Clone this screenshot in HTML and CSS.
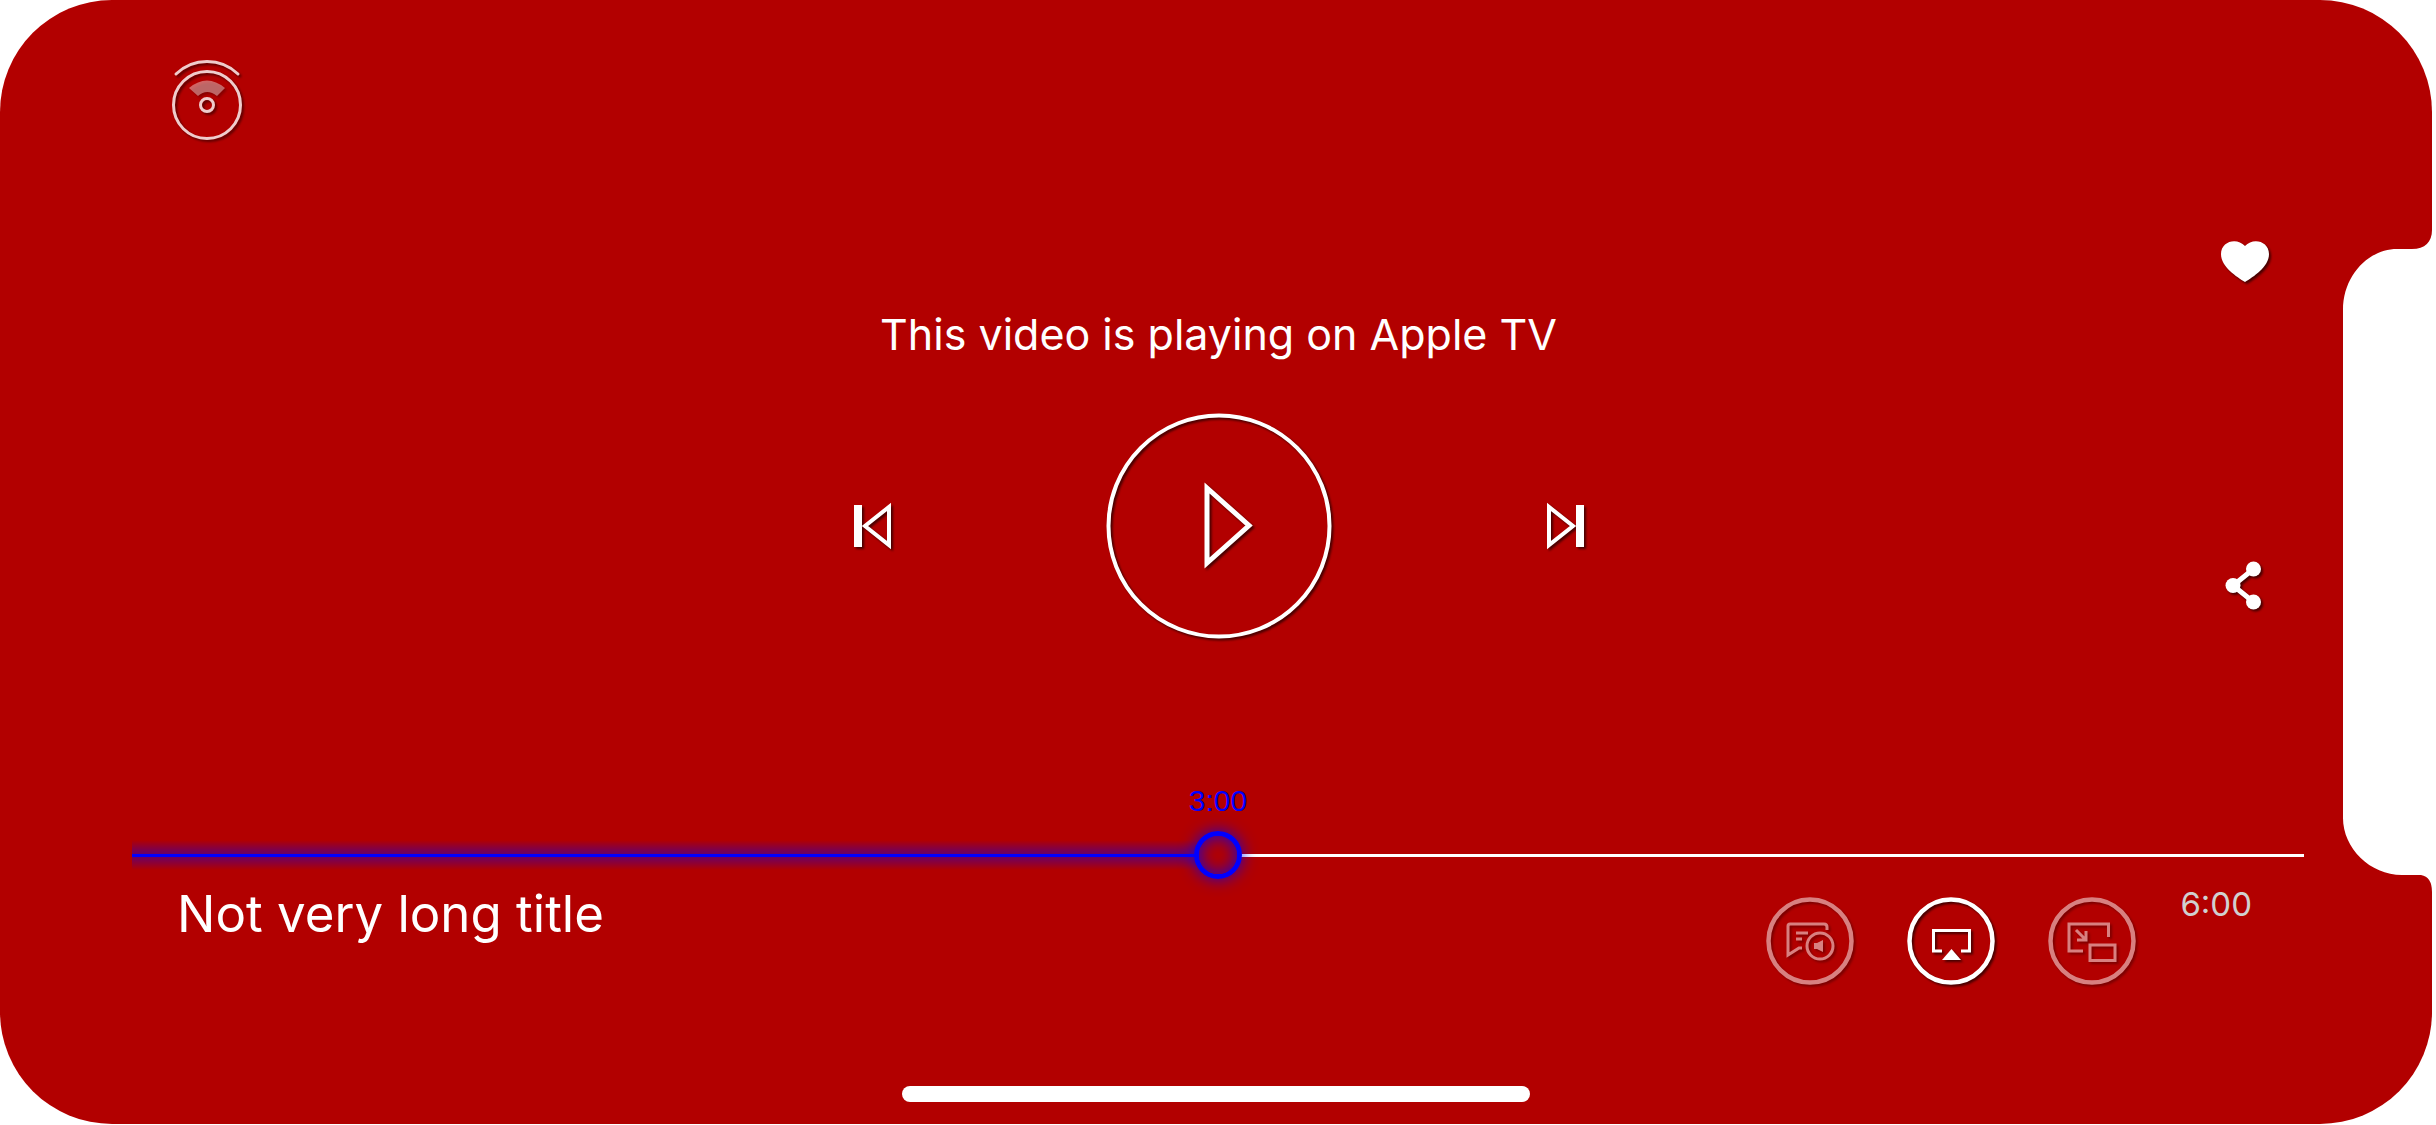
FILE: index.html
```html
<!DOCTYPE html>
<html lang="en">
<head>
<meta charset="utf-8">
<meta name="viewport" content="width=device-width, initial-scale=1">
<title>Video player</title>
<link rel="stylesheet" href="styles.css">
</head>
<body>
<main class="player">
  <header class="top">
    <button class="icon-button cast" type="button" aria-label="360 degree view">
      <svg width="80" height="84" viewBox="0 0 80 84" fill="none" stroke="#fff" stroke-width="3" stroke-linecap="round">
        <path d="M9 18Q22 5.500 40 5.500T71 18"/>
        <circle cx="40" cy="49" r="33.500"/>
        <circle cx="40" cy="49" r="6.500"/>
        <path d="M22 32Q40 17 58 32L50 40Q40 32 31 40Z" fill="#fff" fill-opacity=".5" stroke="none"/>
      </svg>
    </button>
  </header>

  <section class="stage">
    <div class="center">
      <h1 class="message">This video is playing on Apple TV</h1>
      <div class="controls">
        <button class="icon-button" type="button" aria-label="Previous">
          <svg width="48" height="60" viewBox="0 0 48 60" fill="none" stroke="#fff" stroke-width="4">
            <path d="M10 9V51" stroke-width="8"/>
            <path d="M41 11V49L17 30Z"/>
          </svg>
        </button>
        <button class="icon-button play" type="button" aria-label="Play">
          <svg width="226" height="226" viewBox="0 0 226 226" fill="none" stroke="#fff" stroke-width="4">
            <circle cx="113" cy="113" r="110.500"/>
            <path d="M101 75V150L143 112.500Z" stroke-width="5"/>
          </svg>
        </button>
        <button class="icon-button" type="button" aria-label="Next">
          <svg width="48" height="60" viewBox="0 0 48 60" fill="none" stroke="#fff" stroke-width="4">
            <path d="M38 9V51" stroke-width="8"/>
            <path d="M7 11V49L31 30Z"/>
          </svg>
        </button>
      </div>
    </div>
    <div class="actions">
      <button class="icon-button" type="button" aria-label="Like">
        <svg width="60" height="60" viewBox="0 0 60 60" fill="#fff">
          <path d="M30 51C22 46 6 36 6 23C6 10 22 6 30 15C38 6 54 10 54 23C54 36 38 46 30 51Z"/>
        </svg>
      </button>
      <button class="icon-button" type="button" aria-label="Share">
        <svg width="60" height="60" viewBox="0 0 60 60" fill="#fff">
          <path d="M38.500 14L18 30.500L38.500 47" fill="none" stroke="#fff" stroke-width="5"/>
          <circle cx="38.500" cy="14" r="7.500"/><circle cx="18" cy="30.500" r="7.500"/><circle cx="38.500" cy="47" r="7.500"/>
        </svg>
      </button>
    </div>
  </section>

  <section class="timeline">
    <label class="elapsed" for="seek">3:00</label>
    <input class="seek" id="seek" type="range" min="0" max="360" value="180">
  </section>

  <footer class="bottom">
    <h2 class="title">Not very long title</h2>
    <div class="tools">
      <button class="icon-button" type="button" aria-label="Audio and subtitles" disabled>
        <svg width="88" height="88" viewBox="0 0 88 88" fill="none" stroke="#fff" stroke-width="3">
          <circle cx="44" cy="44" r="41.500" stroke-width="4.500"/>
          <path d="M61 33V30Q61 27 58 27H24Q22 27 22 29V58L33 51H36M30 36H42M30 42H36"/>
          <circle cx="54" cy="49" r="13"/>
          <path d="M48 46H51L57 43V55L51 52H48Z" fill="#fff" stroke="none"/>
        </svg>
      </button>
      <button class="icon-button" type="button" aria-label="AirPlay">
        <svg width="88" height="88" viewBox="0 0 88 88" fill="none" stroke="#fff" stroke-width="3">
          <circle cx="44" cy="44" r="41.500" stroke-width="4.500"/>
          <path d="M35 54H26.500V33.500H62.500V54H54"/>
          <path d="M44.500 52L54 63H35Z" fill="#fff" stroke="none"/>
        </svg>
      </button>
      <button class="icon-button" type="button" aria-label="Picture in picture" disabled>
        <svg width="88" height="88" viewBox="0 0 88 88" fill="none" stroke="#fff" stroke-width="3">
          <circle cx="44" cy="44" r="41.500" stroke-width="4.500"/>
          <path d="M60.500 40V27H21V54H35M28 33L38 43M29 43H38V34"/>
          <path d="M42 48H67V63.500H42Z"/>
        </svg>
      </button>
      <span class="duration">6:00</span>
    </div>
  </footer>
  <div class="home"></div>
  <svg class="notch" width="92" height="662" viewBox="0 0 92 662" fill="#fff" aria-hidden="true">
    <path d="M92 0H90C90 12 83 19 70 19H55C27 19 1 45 1 80V588C1 618 28 645 60 645H79Q90 647 90 662H92Z"/>
  </svg>
</main>
</body>
</html>
```

FILE: styles.css
```css
* {
  box-sizing: border-box;
}

body {
  margin: 0;
  background: #fff;
  font-family: Inter, "Liberation Sans", sans-serif;
  color: #fff;
}

.player {
  position: relative;
  display: flex;
  flex-direction: column;
  min-height: calc(100vh - 1px);
  margin: 0 4px 1px 0;
  padding-bottom: 22px;
  border-radius: 112px;
  background: #b20000;
}

.icon-button {
  display: block;
  padding: 0;
  border: 0;
  background: none;
  cursor: pointer;
}

.icon-button svg {
  display: block;
  filter: drop-shadow(2px 2px 1px rgba(0, 0, 0, .6));
}

.icon-button:disabled {
  opacity: .5;
  cursor: default;
}

.top {
  height: 140px;
  padding: 56px 167px 0;
}

.cast {
  opacity: .8;
}

.stage {
  flex: 1;
  display: grid;
  grid-template-columns: 1fr auto 1fr;
  align-items: start;
  padding-left: 5px;
}

.center {
  grid-column: 2;
  padding-top: 166px;
}

.message {
  margin: 0 0 51px;
  font-size: 43px;
  line-height: 56px;
  font-weight: 400;
  text-align: center;
}

.controls {
  display: flex;
  align-items: center;
  justify-content: center;
  gap: 210px;
}

.actions {
  display: grid;
  gap: 264px;
  justify-self: end;
  padding: 91px 157px 0 0;
}

.timeline {
  display: grid;
  gap: 14px;
  padding: 0 128px 0 132px;
}

.elapsed {
  color: #00f;
  font: 30px/32px "Liberation Sans", sans-serif;
  text-align: center;
}

.seek {
  appearance: none;
  width: 100%;
  height: 48px;
  margin: 0;
  background:
    linear-gradient(#00f, #00f) left center / calc(50% - 22px) 3px no-repeat,
    linear-gradient(#fff, #fff) right center / calc(50% - 22px) 3px no-repeat,
    linear-gradient(transparent, rgba(0, 0, 255, .45), transparent) left center / calc(50% - 22px) 30px no-repeat;
}

.seek::-webkit-slider-thumb {
  appearance: none;
  width: 48px;
  height: 48px;
  border: 5px solid #00f;
  border-radius: 50%;
  background: transparent;
  box-shadow: 0 0 16px rgba(0, 0, 255, .8), inset 0 0 16px rgba(0, 0, 255, .8);
}

.bottom {
  display: flex;
  justify-content: space-between;
  align-items: flex-start;
  padding: 3px 180px 0 177px;
}

.title {
  margin: 0;
  font-size: 51px;
  line-height: 64px;
  font-weight: 400;
}

.tools {
  display: flex;
  gap: 53px;
  padding-top: 15px;
}

.duration {
  margin: -13px 0 0 -9px;
  color: #d0d0d0;
  font-size: 33px;
  line-height: 40px;
}

.home {
  width: 628px;
  max-width: 50%;
  height: 16px;
  margin: 101px auto 0;
  border-radius: 8px;
  background: #fff;
}

.notch {
  position: absolute;
  top: 230px;
  right: -2px;
}
```
